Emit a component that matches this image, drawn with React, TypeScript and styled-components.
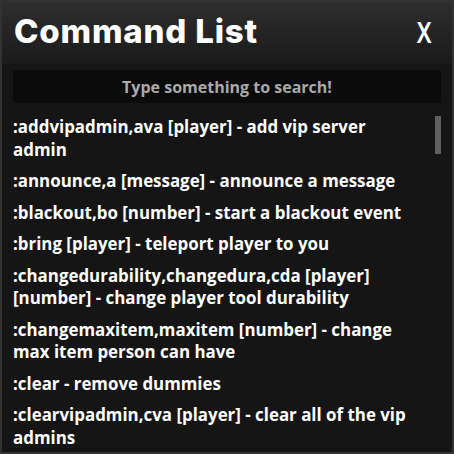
import { createGlobalStyle } from 'styled-components'
import styled from 'styled-components'

const GlobalStyle = createGlobalStyle`
  html, body {
    margin: 0;
    padding: 0;
    background: #151515;
  }
  * {
    box-sizing: border-box;
  }
`

const Window = styled.div`
  width: 454px;
  height: 454px;
  background: #151515;
  border: 2px solid #323232;
  display: flex;
  flex-direction: column;
  overflow: hidden;
`

const Header = styled.div`
  height: 62px;
  padding: 0 12px 4px 12px;
  display: flex;
  align-items: center;
  justify-content: space-between;
  background: linear-gradient(to bottom, #2e2e2e 0%, #1a1a1a 100%);
`

const Title = styled.h1`
  margin: 0;
  font-family: Inter, 'Noto Sans', sans-serif;
  font-weight: 800;
  font-size: 33px;
  color: #ffffff;
  letter-spacing: 0.8px;
`

const CloseButton = styled.button`
  border: none;
  background: none;
  padding: 0;
  margin-right: 6px;
  font-family: 'Noto Sans', sans-serif;
  font-weight: 600;
  font-size: 29px;
  color: #ffffff;
  transform: scaleX(0.8);
`

const SearchBox = styled.div`
  margin: 6px 11px 0 11px;
  height: 33px;
  background: #0b0b0b;
  display: flex;
  align-items: center;
  justify-content: center;
  font-family: 'Open Sans', sans-serif;
  font-weight: 700;
  font-size: 16px;
  color: #a9a9a9;
`

const ListArea = styled.div`
  flex: 1;
  position: relative;
  padding: 13px 37px 0 11px;
  display: flex;
  flex-direction: column;
  gap: 9px;
`

const Item = styled.div`
  font-family: 'Open Sans', sans-serif;
  font-weight: 700;
  font-size: 16.9px;
  line-height: 22.5px;
  color: #ffffff;
`

const ScrollThumb = styled.div`
  position: absolute;
  top: 13px;
  right: 11px;
  width: 6px;
  height: 38px;
  background: #5f5f5f;
`

const commands = [
  ':addvipadmin,ava [player] - add vip server admin',
  ':announce,a [message] - announce a message',
  ':blackout,bo [number] - start a blackout event',
  ':bring [player] - teleport player to you',
  ':changedurability,changedura,cda [player] [number] - change player tool durability',
  ':changemaxitem,maxitem [number] - change max item person can have',
  ':clear - remove dummies',
  ':clearvipadmin,cva [player] - clear all of the vip admins',
]

export default function App() {
  return (
    <>
      <GlobalStyle />
      <Window>
        <Header>
          <Title>Command List</Title>
          <CloseButton>X</CloseButton>
        </Header>
        <SearchBox>Type something to search!</SearchBox>
        <ListArea>
          {commands.map((c) => (
            <Item key={c}>{c}</Item>
          ))}
          <ScrollThumb />
        </ListArea>
      </Window>
    </>
  )
}
